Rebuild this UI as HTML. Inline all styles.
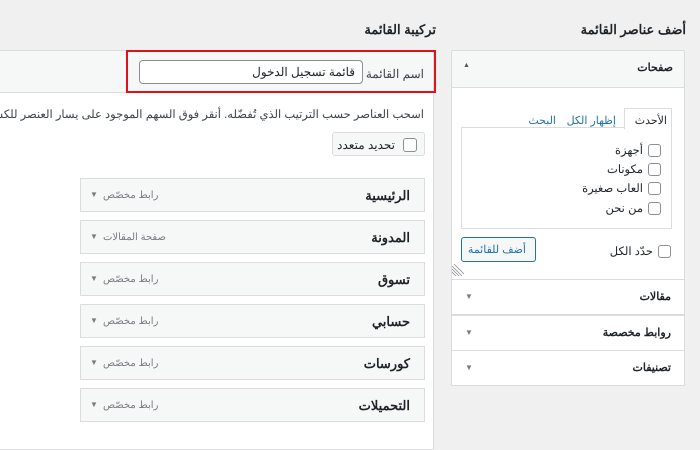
<!DOCTYPE html>
<html><head><meta charset="utf-8"><style>
*{box-sizing:border-box;margin:0;padding:0}
body{width:700px;height:433px;overflow:hidden;background:#f0f0f1;font-family:"Liberation Sans","Noto Sans CJK SC",sans-serif;color:#1d2327;position:relative;font-size:12px}
.a{position:absolute}
.h{font-size:13px;font-weight:bold;color:#1d2327;direction:rtl}
.cb{position:absolute;width:14px;height:14px;border:1px solid #8c8f94;border-radius:3px;background:#fff}
.t{position:absolute;direction:rtl;white-space:nowrap}
.item{position:absolute;left:80px;width:345px;height:34px;background:#f6f7f7;border:1px solid #dcdcde}
.item b{position:absolute;right:14px;top:9px;font-size:13px;direction:rtl}
.item span{position:absolute;left:22px;top:11px;font-size:10px;color:#787c82;direction:rtl}
.item i{position:absolute;left:9px;top:11px;font-style:normal;font-size:8px;color:#787c82}
.sec{position:absolute;left:451px;width:234px;border:1px solid #dcdcde;background:#fff;border-top:none}
.sec b{position:absolute;right:13px;font-size:11px;direction:rtl}
.sec i{position:absolute;left:13px;font-style:normal;font-size:8px;color:#787c82}
</style></head><body>
<div class="t h" style="right:14px;top:22px">أضف عناصر القائمة</div>
<div class="t h" style="right:264px;top:22px">تركيبة القائمة</div>

<div class="a" style="left:-2px;top:50px;width:436px;height:400px;border:1px solid #dcdcde;background:#fff"></div>
<div class="a" style="left:-2px;top:51px;width:435px;height:42px;background:#f6f7f7;border-bottom:1px solid #dcdcde"></div>
<div class="a" style="left:126px;top:50px;width:310px;height:43px;border:2px solid #e0111b"></div>
<div class="t" style="right:276px;top:67px;font-size:12px;color:#3c434a">اسم القائمة</div>
<div class="a" style="left:139px;top:60px;width:224px;height:24px;border:1px solid #8c8f94;border-radius:4px;background:#fff"></div>
<div class="t" style="right:345px;top:65px;font-size:12px">قائمة تسجيل الدخول</div>
<div class="t" style="right:276px;top:107px;font-size:11.5px;color:#3c434a">اسحب العناصر حسب الترتيب الذي تُفضّله. أنقر فوق السهم الموجود على يسار العنصر للكشف</div>
<div class="a" style="left:332px;top:132px;width:93px;height:24px;background:#f6f7f7;border:1px solid #dcdcde;border-radius:3px"></div>
<div class="cb" style="left:403px;top:138px"></div>
<div class="t" style="right:305px;top:138px;font-size:12px">تحديد متعدد</div>

<div class="item" style="top:178px"><b>الرئيسية</b><span>رابط مخصّص</span><i>▼</i></div>
<div class="item" style="top:220px"><b>المدونة</b><span>صفحة المقالات</span><i>▼</i></div>
<div class="item" style="top:262px"><b>تسوق</b><span>رابط مخصّص</span><i>▼</i></div>
<div class="item" style="top:304px"><b>حسابي</b><span>رابط مخصّص</span><i>▼</i></div>
<div class="item" style="top:346px"><b>كورسات</b><span>رابط مخصّص</span><i>▼</i></div>
<div class="item" style="top:388px"><b>التحميلات</b><span>رابط مخصّص</span><i>▼</i></div>

<div class="a" style="left:451px;top:50px;width:234px;height:336px;border:1px solid #dcdcde;background:#fff"></div>
<div class="a" style="left:452px;top:51px;width:232px;height:37px;background:#f6f7f7;border-bottom:1px solid #dcdcde"></div>
<div class="t" style="right:27px;top:61px;font-size:11px;font-weight:bold">صفحات</div>
<div class="a" style="left:463px;top:62px;font-size:7px;color:#50575e">▲</div>

<div class="a" style="left:461px;top:127px;width:211px;height:102px;border:1px solid #dcdcde"></div>
<div class="a" style="left:624px;top:108px;width:48px;height:21px;border:1px solid #dcdcde;border-bottom:none;background:#fff"></div>
<div class="t" style="right:33px;top:114px;font-size:11px">الأحدث</div>
<div class="t" style="right:84px;top:114px;font-size:11px;color:#2271b1">إظهار الكل</div>
<div class="t" style="right:144px;top:114px;font-size:11px;color:#2271b1">البحث</div>
<div class="cb" style="left:648px;top:144px;width:13px;height:13px"></div>
<div class="t" style="right:57px;top:143px;font-size:11.5px">أجهزة</div>
<div class="cb" style="left:648px;top:163px;width:13px;height:13px"></div>
<div class="t" style="right:57px;top:162px;font-size:11.5px">مكونات</div>
<div class="cb" style="left:648px;top:182px;width:13px;height:13px"></div>
<div class="t" style="right:57px;top:181px;font-size:11.5px">العاب صغيرة</div>
<div class="cb" style="left:648px;top:202px;width:13px;height:13px"></div>
<div class="t" style="right:57px;top:201px;font-size:11.5px">من نحن</div>

<div class="a" style="left:461px;top:237px;width:75px;height:25px;border:1px solid #2271b1;border-radius:3px;background:#f6f7f7"></div>
<div class="t" style="right:174px;top:243px;font-size:11px;color:#2271b1">أضف للقائمة</div>
<div class="cb" style="left:658px;top:245px;width:13px;height:13px"></div>
<div class="t" style="right:47px;top:244px;font-size:11.5px">حدّد الكل</div>
<svg class="a" style="left:452px;top:264px" width="12" height="12"><path d="M0 2L10 12M0 5L7 12M0 8L4 12M2 0L12 10" stroke="#8c8f94" stroke-width="0.8"/></svg>

<div class="sec" style="top:279px;height:36px;border-top:1px solid #dcdcde;background:#fff"><b style="top:10px">مقالات</b><i style="top:12px">▼</i></div>
<div class="sec" style="top:315px;height:36px;border-top:1px solid #dcdcde"><b style="top:10px">روابط مخصصة</b><i style="top:12px">▼</i></div>
<div class="sec" style="top:350px;height:36px;border-top:1px solid #dcdcde"><b style="top:10px">تصنيفات</b><i style="top:12px">▼</i></div>
</body></html>
